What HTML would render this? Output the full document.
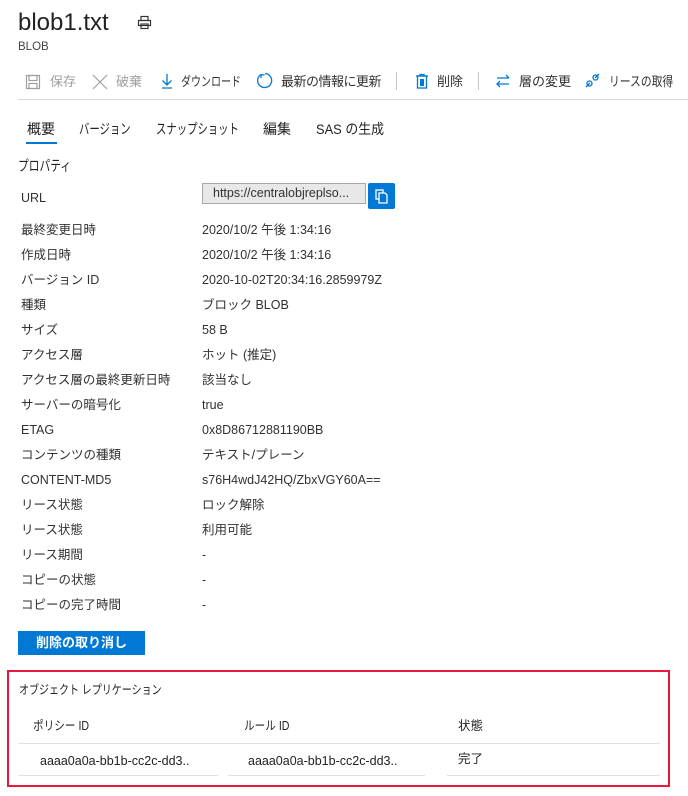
<!DOCTYPE html>
<html><head><meta charset="utf-8"><style>
body{margin:0;width:688px;height:796px;background:#fff;font-family:"Liberation Sans","Noto Sans CJK JP",sans-serif;color:#323130;position:relative;overflow:hidden}
div{line-height:16px}
.a{position:absolute;white-space:nowrap}
.l{position:absolute;left:21px;font-size:12.5px;white-space:nowrap}
.v{position:absolute;left:202px;font-size:12.5px;white-space:nowrap}
.s{transform-origin:0 50%}
</style></head><body>
<div class="a" style="left:18px;top:10px;font-size:24px;line-height:26px;color:#222">blob1.txt</div>
<svg class="a" style="left:137px;top:15px" width="15" height="15" viewBox="0 0 15 15" fill="none" stroke="#333" stroke-width="1.2"><rect x="4" y="1.5" width="7" height="4"/><rect x="1.5" y="5.5" width="12" height="5"/><rect x="4" y="9" width="7" height="4.5"/></svg>
<div class="a" style="left:18px;top:39px;font-size:11.5px;color:#444">BLOB</div>

<svg class="a" style="left:25px;top:74px" width="16" height="16" viewBox="0 0 16 16" fill="none" stroke="#a19f9d" stroke-width="1.2"><rect x="1.5" y="1.5" width="13" height="13"/><rect x="4" y="1.5" width="8" height="5"/><rect x="4" y="9.5" width="8" height="5"/></svg>
<div class="a" style="left:50px;top:74px;font-size:13px;color:#a19f9d">保存</div>
<svg class="a" style="left:92px;top:74px" width="16" height="16" viewBox="0 0 16 16" stroke="#a19f9d" stroke-width="1.2"><path d="M1 1L15 15M15 1L1 15"/></svg>
<div class="a" style="left:116px;top:74px;font-size:13px;color:#a19f9d">破棄</div>
<svg class="a" style="left:159px;top:73px" width="16" height="16" viewBox="0 0 16 16" fill="none" stroke="#0078d4" stroke-width="1.3"><path d="M8 1V12M3.5 7.5L8 12L12.5 7.5M3 15H13"/></svg>
<div class="a s" style="left:181px;top:74px;font-size:13px;transform:scaleX(.77)">ダウンロード</div>
<svg class="a" style="left:256px;top:72px" width="17" height="17" viewBox="0 0 17 17" fill="none" stroke="#0078d4" stroke-width="1.3"><path d="M5 2.5A7 7 0 1 0 9 1.5M5 2.5L5 6M5 2.5L8.5 3"/></svg>
<div class="a" style="left:281px;top:74px;font-size:13px;letter-spacing:-0.5px">最新の情報に更新</div>
<div class="a" style="left:396px;top:72px;width:1px;height:18px;background:#c8c6c4"></div>
<svg class="a" style="left:414px;top:73px" width="16" height="16" viewBox="0 0 16 16" fill="none" stroke="#0078d4" stroke-width="1.3"><path d="M2 3H14M6 3V1.5H10V3"/><rect x="3.5" y="3" width="9" height="12"/><rect x="6" y="6" width="4" height="7" fill="#0078d4" stroke="none"/></svg>
<div class="a" style="left:437px;top:74px;font-size:13px">削除</div>
<div class="a" style="left:478px;top:72px;width:1px;height:18px;background:#c8c6c4"></div>
<svg class="a" style="left:495px;top:73px" width="16" height="16" viewBox="0 0 16 16" fill="none" stroke="#0078d4" stroke-width="1.3"><path d="M2 5H14M11 2L14 5M14 11H2M5 8L2 11L5 14"/></svg>
<div class="a" style="left:519px;top:74px;font-size:13px">層の変更</div>
<svg class="a" style="left:584px;top:72px" width="17" height="17" viewBox="0 0 17 17" fill="none" stroke="#0078d4" stroke-width="1.3"><path d="M2 15L6 11M11 6L15 2"/><circle cx="5.5" cy="11.5" r="2.5"/><circle cx="11.5" cy="5.5" r="2.5"/></svg>
<div class="a s" style="left:609px;top:74px;font-size:13px;transform:scaleX(.83)">リースの取得</div>
<div class="a" style="left:18px;top:99px;width:670px;height:1px;background:#d6d6d6"></div>

<div class="a" style="left:27px;top:121px;font-size:14px;color:#222">概要</div>
<div class="a" style="left:26px;top:142px;width:31px;height:2px;background:#0078d4"></div>
<div class="a s" style="left:79px;top:121px;font-size:14px;color:#222;transform:scaleX(.74)">バージョン</div>
<div class="a s" style="left:156px;top:121px;font-size:14px;color:#222;transform:scaleX(.74)">スナップショット</div>
<div class="a" style="left:263px;top:121px;font-size:14px;color:#222">編集</div>
<div class="a s" style="left:316px;top:121px;font-size:14px;color:#222;transform:scaleX(.92)">SAS の生成</div>

<div class="a s" style="left:18px;top:159px;font-size:14.5px;color:#222;transform:scaleX(.74)">プロパティ</div>

<div class="l" style="top:190px">URL</div>
<div class="a" style="left:202px;top:183px;width:164px;height:21px;background:#e8e8e8;border:1px solid #a8a8a8;box-sizing:border-box;font-size:12.5px;line-height:19px;padding-left:10px;color:#323130">https://centralobjreplso...</div>
<div class="a" style="left:368px;top:183px;width:27px;height:26px;background:#0078d4;border-radius:2px"><svg width="27" height="26" viewBox="0 0 27 26" fill="none" stroke="#fff" stroke-width="1.3"><rect x="8" y="7" width="7" height="9"/><path d="M11 10H17L19 12V20H11Z" fill="#0078d4"/></svg></div>

<div class="l" style="top:222px">最終変更日時</div><div class="v" style="top:222px">2020/10/2 午後 1:34:16</div>
<div class="l" style="top:247px">作成日時</div><div class="v" style="top:247px">2020/10/2 午後 1:34:16</div>
<div class="l" style="top:272px">バージョン ID</div><div class="v" style="top:272px">2020-10-02T20:34:16.2859979Z</div>
<div class="l" style="top:297px">種類</div><div class="v" style="top:297px">ブロック BLOB</div>
<div class="l" style="top:322px">サイズ</div><div class="v" style="top:322px">58 B</div>
<div class="l" style="top:347px">アクセス層</div><div class="v" style="top:347px">ホット (推定)</div>
<div class="l" style="top:372px">アクセス層の最終更新日時</div><div class="v" style="top:372px">該当なし</div>
<div class="l" style="top:397px">サーバーの暗号化</div><div class="v" style="top:397px">true</div>
<div class="l" style="top:422px">ETAG</div><div class="v" style="top:422px">0x8D86712881190BB</div>
<div class="l" style="top:447px">コンテンツの種類</div><div class="v" style="top:447px">テキスト/プレーン</div>
<div class="l" style="top:472px">CONTENT-MD5</div><div class="v" style="top:472px">s76H4wdJ42HQ/ZbxVGY60A==</div>
<div class="l" style="top:497px">リース状態</div><div class="v" style="top:497px">ロック解除</div>
<div class="l" style="top:522px">リース状態</div><div class="v" style="top:522px">利用可能</div>
<div class="l" style="top:547px">リース期間</div><div class="v" style="top:547px">-</div>
<div class="l" style="top:572px">コピーの状態</div><div class="v" style="top:572px">-</div>
<div class="l" style="top:597px">コピーの完了時間</div><div class="v" style="top:597px">-</div>

<div class="a" style="left:18px;top:631px;width:127px;height:24px;background:#0078d4;color:#fff;font-size:13px;font-weight:bold;line-height:24px;text-align:center">削除の取り消し</div>

<div class="a" style="left:7px;top:670px;width:663px;height:117px;border:2px solid #e8193c;box-sizing:border-box"></div>
<div class="a s" style="left:19px;top:682px;font-size:12.5px;color:#222;transform:scaleX(.8)">オブジェクト レプリケーション</div>
<div class="a s" style="left:33px;top:718px;font-size:12.5px;color:#222;transform:scaleX(.85)">ポリシー ID</div>
<div class="a s" style="left:244px;top:718px;font-size:12.5px;color:#222;transform:scaleX(.85)">ルール ID</div>
<div class="a" style="left:458px;top:718px;font-size:12.5px;color:#222">状態</div>
<div class="a" style="left:18px;top:743px;width:642px;height:1px;background:#e1e1e1"></div>
<div class="a" style="left:40px;top:753px;font-size:12.5px;color:#222">aaaa0a0a-bb1b-cc2c-dd3..</div>
<div class="a" style="left:248px;top:753px;font-size:12.5px;color:#222">aaaa0a0a-bb1b-cc2c-dd3..</div>
<div class="a" style="left:458px;top:751px;font-size:12.5px;color:#222">完了</div>
<div class="a" style="left:18px;top:775px;width:200px;height:1px;background:#e1e1e1"></div>
<div class="a" style="left:228px;top:775px;width:197px;height:1px;background:#e1e1e1"></div>
<div class="a" style="left:447px;top:775px;width:213px;height:1px;background:#e1e1e1"></div>
</body></html>
